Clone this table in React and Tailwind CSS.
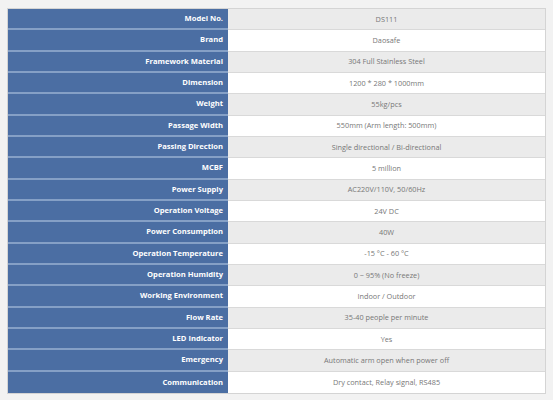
const rows = [
  ['Model No.', 'DS111'],
  ['Brand', 'Daosafe'],
  ['Framework Material', '304 Full Stainless Steel'],
  ['Dimension', '1200 * 280 * 1000mm'],
  ['Weight', '55kg/pcs'],
  ['Passage Width', '550mm (Arm length: 500mm)'],
  ['Passing Direction', 'Single directional / Bi-directional'],
  ['MCBF', '5 million'],
  ['Power Supply', 'AC220V/110V, 50/60Hz'],
  ['Operation Voltage', '24V DC'],
  ['Power Consumption', '40W'],
  ['Operation Temperature', '-15 °C - 60 °C'],
  ['Operation Humidity', '0 ~ 95% (No freeze)'],
  ['Working Environment', 'Indoor / Outdoor'],
  ['Flow Rate', '35-40 people per minute'],
  ['LED Indicator', 'Yes'],
  ['Emergency', 'Automatic arm open when power off'],
  ['Communication', 'Dry contact, Relay signal, RS485'],
];

export default function App() {
  return (
    <div className="w-[553px] h-[400px] bg-[#f2f2f2] pt-[8px] pl-[7px]" style={{ fontFamily: '"Open Sans", "Liberation Sans", sans-serif' }}>
      <div className="w-[539px] h-[386px] grid grid-cols-[220px_1fr] grid-rows-[repeat(18,minmax(0,1fr))] border border-[#d4d4d4]">
        {rows.map(([label, value], i) => (
          <div key={label} className="contents">
            <div
              className={`bg-[#4b6ea3] flex items-center justify-end pr-[5px] text-white font-bold text-[7.6px] ${
                i < rows.length - 1 ? 'border-b-2 border-[#85a0c6]' : ''
              }`}
            >
              {label}
            </div>
            <div
              className={`flex items-center justify-center text-[#777777] text-[7.3px] ${
                i % 2 === 0 ? 'bg-[#ebebeb]' : 'bg-white'
              } ${i < rows.length - 1 ? 'border-b border-[#d9d9d9]' : ''}`}
            >
              {value}
            </div>
          </div>
        ))}
      </div>
    </div>
  );
}
